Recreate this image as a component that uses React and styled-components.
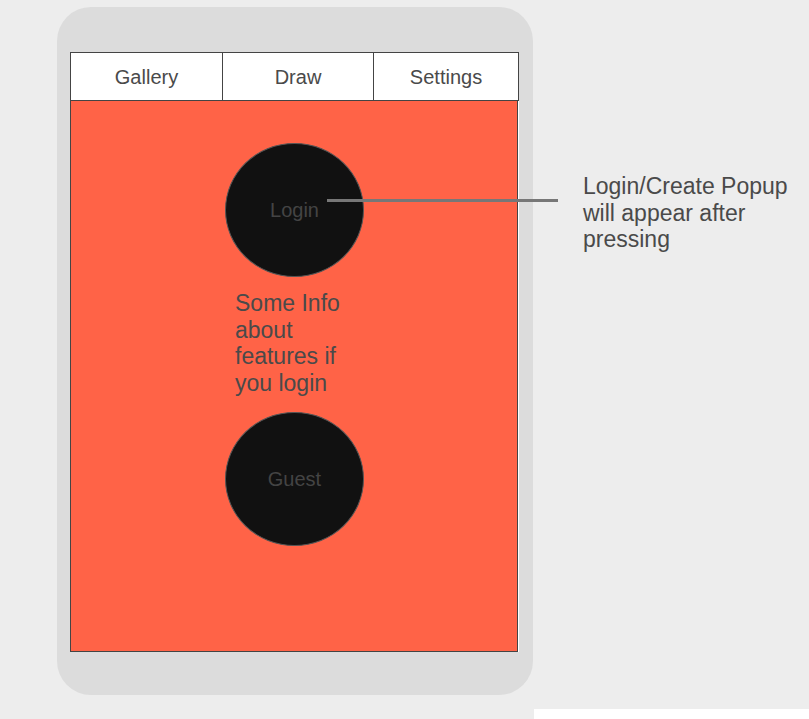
import React from "react";
import styled, { createGlobalStyle } from "styled-components";

const GlobalStyle = createGlobalStyle`
  html, body {
    margin: 0;
    padding: 0;
    background: #ffffff;
  }
  body {
    font-family: "Liberation Sans", Arial, sans-serif;
    color: #444444;
  }
`;

const Page = styled.div`
  width: 809px;
  height: 719px;
  display: flex;
  flex-direction: column;
  overflow: hidden;
`;

const Stage = styled.div`
  position: relative;
  height: 709px;
  background: #ededed;
  display: flex;
  align-items: flex-start;
  padding: 7px 0 0 57px;
  box-sizing: border-box;
`;

const BottomStrip = styled.div`
  flex: 1;
  display: flex;
`;

const StripCell = styled.div`
  width: ${p => (p.$width ? `${p.$width}px` : "auto")};
  flex: ${p => (p.$width ? "none" : 1)};
  background: ${p => p.$bg};
`;

const PhoneFrame = styled.div`
  width: 476px;
  height: 688px;
  box-sizing: border-box;
  background: #dcdcdc;
  border-radius: 34px;
  padding: 45px 0 0 13px;
`;

const Screen = styled.div`
  width: 449px;
  background: #ffffff;
  display: flex;
  flex-direction: column;
`;

const TabBar = styled.div`
  display: grid;
  grid-template-columns: 151px 150px 144px;
  column-gap: 1px;
  background: #444444;
  border: 1px solid #444444;
  height: 47px;
`;

const Tab = styled.div`
  background: #ffffff;
  display: flex;
  align-items: center;
  justify-content: center;
  padding-top: 2px;
  box-sizing: border-box;
  font-size: 20px;
  color: #4a4a4a;
`;

const Content = styled.div`
  width: 448px;
  height: 551px;
  box-sizing: border-box;
  background: #ff6347;
  border: 1px solid #444444;
  border-top: none;
  display: flex;
  flex-direction: column;
  align-items: flex-start;
  padding: 42px 0 0 154px;
`;

const RoundButton = styled.div`
  width: 139px;
  height: 134px;
  box-sizing: border-box;
  border-radius: 50%;
  background: #111111;
  border: 1px solid #555555;
  display: flex;
  align-items: center;
  justify-content: center;
  font-size: 20px;
  color: #444444;
  margin-top: ${p => p.$gap || 0}px;
`;

const InfoText = styled.p`
  margin: 13px 0 0 10px;
  width: 116px;
  font-size: 23px;
  line-height: 26.5px;
  color: #4a4a4a;
`;

const Note = styled.p`
  margin: 166px 0 0 50px;
  font-size: 23px;
  line-height: 26.7px;
  color: #4a4a4a;
`;

const Connector = styled.div`
  position: absolute;
  left: 327px;
  top: 199px;
  width: 231px;
  height: 3px;
  background: #777777;
`;

const tabs = ["Gallery", "Draw", "Settings"];

export default function App() {
  return (
    <Page>
      <GlobalStyle />
      <Stage>
        <PhoneFrame>
          <Screen>
            <TabBar>
              {tabs.map(t => (
                <Tab key={t}>{t}</Tab>
              ))}
            </TabBar>
            <Content>
              <RoundButton>Login</RoundButton>
              <InfoText>Some Info about features if you login</InfoText>
              <RoundButton $gap={16}>Guest</RoundButton>
            </Content>
          </Screen>
        </PhoneFrame>
        <Note>
          Login/Create Popup
          <br />
          will appear after
          <br />
          pressing
        </Note>
        <Connector />
      </Stage>
      <BottomStrip>
        <StripCell $width={534} $bg="#ededed" />
        <StripCell $bg="#ffffff" />
      </BottomStrip>
    </Page>
  );
}
